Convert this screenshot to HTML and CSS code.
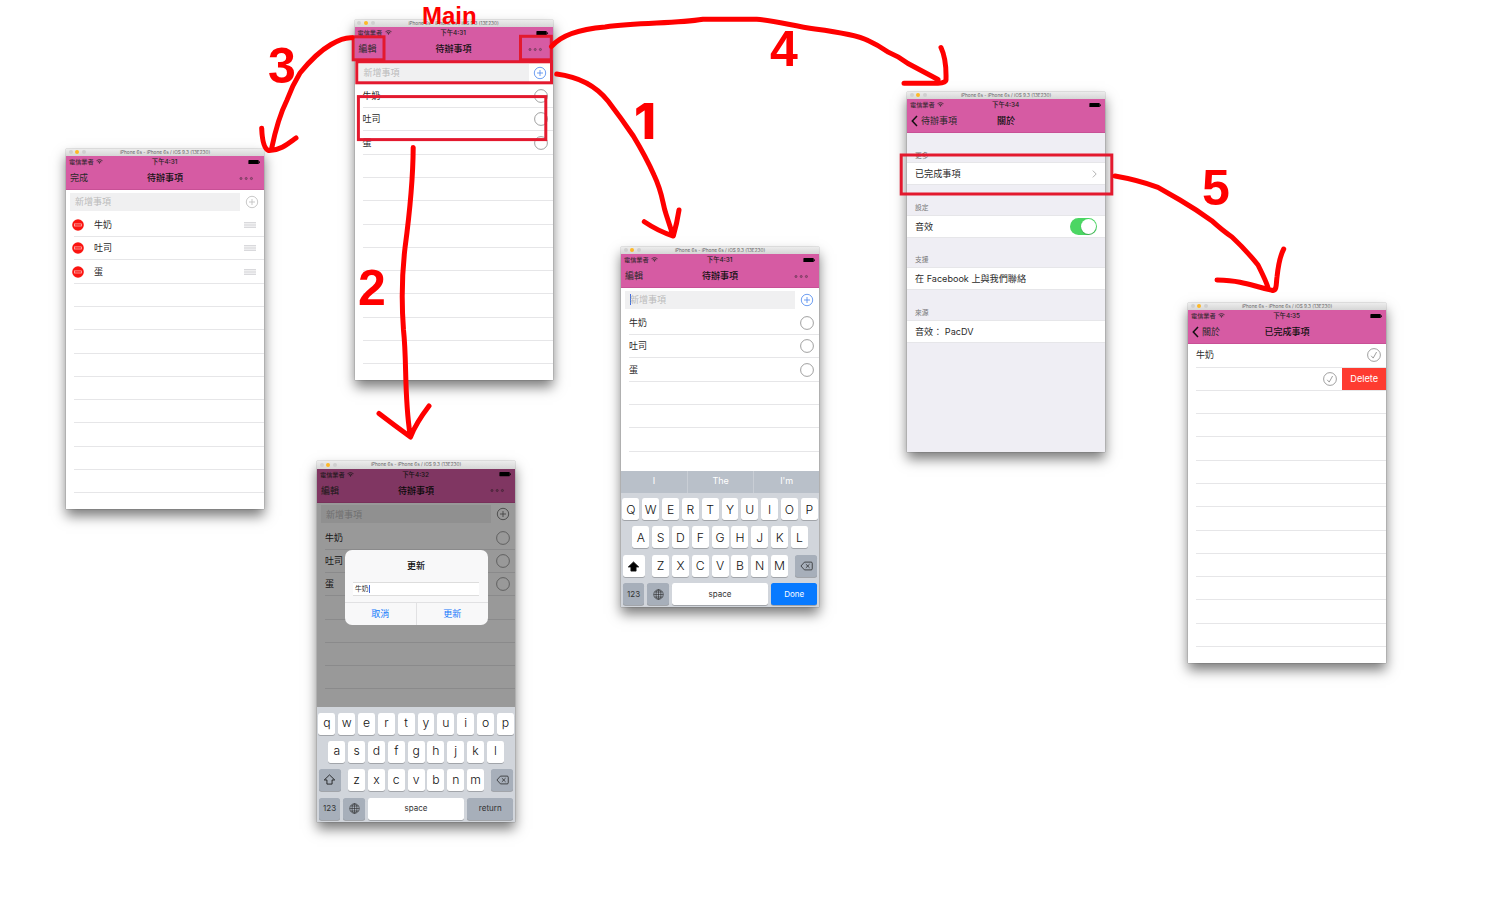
FILE: index.html
```html
<!DOCTYPE html>
<html lang="zh-Hant">
<head>
<meta charset="utf-8">
<title>待辦事項</title>
<link rel="stylesheet" href="styles.css">
</head>
<body>
<svg class="defs" width="0" height="0">
  <symbol id="wifi" viewBox="0 0 14 10"><path d="M1 3.4Q7-1.6 13 3.4M3.2 5.8Q7 2.6 10.8 5.8" fill="none" stroke="#222" stroke-width="1.4"/><path d="M4.8 7.2Q7 5.6 9.2 7.2L7 9.7z" fill="#222"/></symbol>
  <symbol id="battery" viewBox="0 0 26 10"><rect width="23" height="10" rx="1.5"/><rect x="24" y="3" width="2" height="4"/></symbol>
  <symbol id="dots" viewBox="0 0 15 5"><g fill="#222" fill-opacity=".25" stroke="#222" stroke-opacity=".5" stroke-width=".7"><circle cx="2" cy="2.5" r="1.1"/><circle cx="7.2" cy="2.5" r="1.1"/><circle cx="12.4" cy="2.5" r="1.1"/></g></symbol>
  <symbol id="add" viewBox="0 0 14 14"><g fill="none" stroke="currentColor" stroke-width=".8"><circle cx="7" cy="7" r="5.7"/><path d="M7 4v6M4 7h6"/></g></symbol>
  <symbol id="ring" viewBox="0 0 14 14"><circle cx="7" cy="7" r="6.4" fill="none" stroke="#777" stroke-width=".7"/></symbol>
  <symbol id="tick" viewBox="0 0 14 14"><g fill="none" stroke="#777" stroke-width=".7"><circle cx="7" cy="7" r="6.4"/><path d="M4.2 7.8l2 2.3L9.6 4"/></g></symbol>
  <symbol id="minus" viewBox="0 0 12 12"><circle cx="6" cy="6" r="5.8" fill="#fb1410"/><rect x="2.6" y="4.9" width="6.8" height="2.1" fill="#fb1410" stroke="#ffc4c0" stroke-width=".7"/></symbol>
  <symbol id="grip" viewBox="0 0 12 6"><path d="M0 .8h12M0 3h12M0 5.2h12" stroke="#c9c9cd" stroke-width="1"/></symbol>
  <symbol id="back" viewBox="0 0 7 12"><path d="M6 1L1.3 6 6 11" fill="none" stroke="#111" stroke-width="1.5"/></symbol>
  <symbol id="shift" viewBox="0 0 14 12"><path d="M7 1L1.3 6.5h2.9V11h5.6V6.5h2.9z" fill="currentColor" stroke="#111" stroke-width=".9" stroke-linejoin="round"/></symbol>
  <symbol id="erase" viewBox="0 0 14 10"><path d="M4.8.8H12q1.2 0 1.2 1.2v6q0 1.2-1.2 1.2H4.8L1 5zM6.3 3l4 4m0-4l-4 4" fill="none" stroke="#222" stroke-width=".8" stroke-linejoin="round"/></symbol>
  <symbol id="globe" viewBox="0 0 12 12"><g fill="none" stroke="#222" stroke-width=".6"><circle cx="6" cy="6" r="5.2"/><ellipse cx="6" cy="6" rx="2.6" ry="5.2"/><path d="M6 .8v10.4M.8 6h10.4M1.6 3.3h8.8M1.6 8.7h8.8"/></g></symbol>
</svg>

<main class="board">
  <section class="phone phone-main">
    <header class="titlebar"><i></i><i class="on"></i><i></i><span>iPhone 6s - iPhone 6s / iOS 9.3 (13E230)</span></header>
    <div class="screen">
      <div class="top">
        <div class="status"><span>電信業者 <svg class="wifi"><use href="#wifi"/></svg></span><b>下午4:31</b><svg class="battery"><use href="#battery"/></svg></div>
        <nav class="nav"><span>編輯</span><b>待辦事項</b><svg class="dots"><use href="#dots"/></svg></nav>
      </div>
      <div class="entry"><span class="field">新增事項</span><svg class="ico blue"><use href="#add"/></svg></div>
      <ul class="list">
        <li>牛奶<svg class="ico"><use href="#ring"/></svg></li><li>吐司<svg class="ico"><use href="#ring"/></svg></li><li>蛋<svg class="ico"><use href="#ring"/></svg></li>
        <li></li><li></li><li></li><li></li><li></li><li></li><li></li><li></li><li></li><li></li>
      </ul>
    </div>
  </section>

  <section class="phone phone-edit">
    <header class="titlebar"><i></i><i class="on"></i><i></i><span>iPhone 6s - iPhone 6s / iOS 9.3 (13E230)</span></header>
    <div class="screen">
      <div class="top">
        <div class="status"><span>電信業者 <svg class="wifi"><use href="#wifi"/></svg></span><b>下午4:31</b><svg class="battery"><use href="#battery"/></svg></div>
        <nav class="nav"><span>完成</span><b>待辦事項</b><svg class="dots"><use href="#dots"/></svg></nav>
      </div>
      <div class="entry"><span class="field">新增事項</span><svg class="ico grey"><use href="#add"/></svg></div>
      <ul class="list">
        <li><svg class="minus"><use href="#minus"/></svg>牛奶<svg class="grip"><use href="#grip"/></svg></li>
        <li><svg class="minus"><use href="#minus"/></svg>吐司<svg class="grip"><use href="#grip"/></svg></li>
        <li><svg class="minus"><use href="#minus"/></svg>蛋<svg class="grip"><use href="#grip"/></svg></li>
        <li></li><li></li><li></li><li></li><li></li><li></li><li></li><li></li><li></li><li></li>
      </ul>
    </div>
  </section>

  <section class="phone phone-update">
    <header class="titlebar"><i></i><i class="on"></i><i></i><span>iPhone 6s - iPhone 6s / iOS 9.3 (13E230)</span></header>
    <div class="screen">
      <div class="top">
        <div class="status"><span>電信業者 <svg class="wifi"><use href="#wifi"/></svg></span><b>下午4:32</b><svg class="battery"><use href="#battery"/></svg></div>
        <nav class="nav"><span>編輯</span><b>待辦事項</b><svg class="dots"><use href="#dots"/></svg></nav>
      </div>
      <div class="entry"><span class="field">新增事項</span><svg class="ico dark"><use href="#add"/></svg></div>
      <ul class="list">
        <li>牛奶<svg class="ico"><use href="#ring"/></svg></li><li>吐司<svg class="ico"><use href="#ring"/></svg></li><li>蛋<svg class="ico"><use href="#ring"/></svg></li>
        <li></li><li></li><li></li><li></li><li></li>
      </ul>
      <div class="dim"></div>
      <div class="alert">
        <h2>更新</h2>
        <div class="input">牛奶<i class="caret"></i></div>
        <div class="actions"><span>取消</span><span>更新</span></div>
      </div>
      <div class="keyboard">
        <div class="keys"><kbd>q</kbd><kbd>w</kbd><kbd>e</kbd><kbd>r</kbd><kbd>t</kbd><kbd>y</kbd><kbd>u</kbd><kbd>i</kbd><kbd>o</kbd><kbd>p</kbd></div>
        <div class="keys"><kbd>a</kbd><kbd>s</kbd><kbd>d</kbd><kbd>f</kbd><kbd>g</kbd><kbd>h</kbd><kbd>j</kbd><kbd>k</kbd><kbd>l</kbd></div>
        <div class="keys"><kbd class="mod edge-l"><svg class="shift"><use href="#shift"/></svg></kbd><kbd>z</kbd><kbd>x</kbd><kbd>c</kbd><kbd>v</kbd><kbd>b</kbd><kbd>n</kbd><kbd>m</kbd><kbd class="mod edge-r"><svg class="erase"><use href="#erase"/></svg></kbd></div>
        <div class="keys small"><kbd class="mod num">123</kbd><kbd class="mod num"><svg class="globe"><use href="#globe"/></svg></kbd><kbd class="space">space</kbd><kbd class="mod ret">return</kbd></div>
      </div>
    </div>
  </section>

  <section class="phone phone-add">
    <header class="titlebar"><i></i><i class="on"></i><i></i><span>iPhone 6s - iPhone 6s / iOS 9.3 (13E230)</span></header>
    <div class="screen">
      <div class="top">
        <div class="status"><span>電信業者 <svg class="wifi"><use href="#wifi"/></svg></span><b>下午4:31</b><svg class="battery"><use href="#battery"/></svg></div>
        <nav class="nav"><span>編輯</span><b>待辦事項</b><svg class="dots"><use href="#dots"/></svg></nav>
      </div>
      <div class="entry"><span class="field"><i class="caret"></i>新增事項</span><svg class="ico blue"><use href="#add"/></svg></div>
      <ul class="list">
        <li>牛奶<svg class="ico"><use href="#ring"/></svg></li><li>吐司<svg class="ico"><use href="#ring"/></svg></li><li>蛋<svg class="ico"><use href="#ring"/></svg></li>
        <li></li><li></li><li></li><li></li>
      </ul>
      <div class="keyboard">
        <div class="suggest"><span>I</span><span>The</span><span>I'm</span></div>
        <div class="keys"><kbd>Q</kbd><kbd>W</kbd><kbd>E</kbd><kbd>R</kbd><kbd>T</kbd><kbd>Y</kbd><kbd>U</kbd><kbd>I</kbd><kbd>O</kbd><kbd>P</kbd></div>
        <div class="keys"><kbd>A</kbd><kbd>S</kbd><kbd>D</kbd><kbd>F</kbd><kbd>G</kbd><kbd>H</kbd><kbd>J</kbd><kbd>K</kbd><kbd>L</kbd></div>
        <div class="keys"><kbd class="edge-l"><svg class="shift full"><use href="#shift"/></svg></kbd><kbd>Z</kbd><kbd>X</kbd><kbd>C</kbd><kbd>V</kbd><kbd>B</kbd><kbd>N</kbd><kbd>M</kbd><kbd class="mod edge-r"><svg class="erase"><use href="#erase"/></svg></kbd></div>
        <div class="keys small"><kbd class="mod num">123</kbd><kbd class="mod num"><svg class="globe"><use href="#globe"/></svg></kbd><kbd class="space">space</kbd><kbd class="ret done">Done</kbd></div>
      </div>
    </div>
  </section>

  <section class="phone phone-about">
    <header class="titlebar"><i></i><i class="on"></i><i></i><span>iPhone 6s - iPhone 6s / iOS 9.3 (13E230)</span></header>
    <div class="screen grouped">
      <div class="top">
        <div class="status"><span>電信業者 <svg class="wifi"><use href="#wifi"/></svg></span><b>下午4:34</b><svg class="battery"><use href="#battery"/></svg></div>
        <nav class="nav"><span><svg class="back"><use href="#back"/></svg>待辦事項</span><b>關於</b><em></em></nav>
      </div>
      <h3>更多</h3><div class="cell">已完成事項<svg class="chevron" viewBox="0 0 5 8"><path d="M.8.6L4.2 4 .8 7.4" fill="none" stroke="#aaa" stroke-width=".9"/></svg></div>
      <h3>設定</h3><div class="cell">音效<span class="toggle"></span></div>
      <h3>支援</h3><div class="cell">在 Facebook 上與我們聯絡</div>
      <h3>來源</h3><div class="cell">音效： PacDV</div>
    </div>
  </section>

  <section class="phone phone-done">
    <header class="titlebar"><i></i><i class="on"></i><i></i><span>iPhone 6s - iPhone 6s / iOS 9.3 (13E230)</span></header>
    <div class="screen">
      <div class="top">
        <div class="status"><span>電信業者 <svg class="wifi"><use href="#wifi"/></svg></span><b>下午4:35</b><svg class="battery"><use href="#battery"/></svg></div>
        <nav class="nav"><span><svg class="back"><use href="#back"/></svg>關於</span><b>已完成事項</b><em></em></nav>
      </div>
      <ul class="list">
        <li>牛奶<svg class="ico"><use href="#tick"/></svg></li>
        <li class="swiped"><svg class="ico"><use href="#tick"/></svg><span class="delete">Delete</span></li>
        <li></li><li></li><li></li><li></li><li></li><li></li><li></li><li></li><li></li><li></li><li></li><li></li>
      </ul>
    </div>
  </section>

  <svg class="notes" width="1500" height="900" viewBox="0 0 1500 900">
    <g class="frames">
      <rect x="353.2" y="36.8" width="30.8" height="23"/>
      <rect x="520.5" y="36.3" width="30.8" height="23.5"/>
      <rect x="356.8" y="61.8" width="194.7" height="21"/>
      <rect x="358.4" y="96.6" width="187.4" height="43"/>
      <rect x="901.2" y="155" width="210.6" height="39"/>
    </g>
    <g class="arrows">
      <path d="M352 37.8C344 37 337 41 331 44.5C318 52 309 62 300 73Q292 86 287 100C280 114 275 132 271.5 149M261.7 128.3Q262.5 148 268.5 150.5C280 151 289 143 296 138"/>
      <path d="M556.7 74C580 77 596 86 608 101Q621 118 633.3 136Q646 157 654 175C663 194 662 202 666 214L672.5 234M644.3 221.7Q658 231 673.3 236Q677 223 679 210"/>
      <path d="M551.5 46.5C562 34 581 29 605 27C641 22 674 24 703 19.3L756.7 19.3C775 20.5 793 26 815 29C838 32 857 35 868 40.5Q878 45 888 52Q898 56 908 63.5L938 79.5M904 83.3H938Q946.5 83 946 79Q946.5 59 941 47.5"/>
      <path d="M1115 176Q1138 180 1158 187.3L1180 200Q1197 210 1211.7 220.7Q1223 231 1232 237Q1246 250 1258 265C1263 275 1267 283 1268 288M1217 280C1247 281 1251 286 1273 290.5C1277 290 1276 284 1277 277Q1279 258 1283.7 249"/>
      <path d="M413.2 147.5C413 181 409 218 405 248C401 282 402 310 403.5 330C407 362 404 395 410 434M379 413.5Q394 425 410.5 437Q416 423 429 406"/>
    </g>
    <g class="labels">
      <text class="heading" x="422" y="24">Main</text>
      <text x="268" y="83">3</text>
      <text class="one" x="634" y="139">1</text>
      <text x="770" y="66">4</text>
      <text x="1202" y="205">5</text>
      <text x="358" y="305">2</text>
    </g>
  </svg>
</main>
</body>
</html>
```
FILE: styles.css
```css
* { box-sizing: border-box; }
body { margin: 0; background: #fff; overflow: hidden; }
.defs { position: absolute; }
.board {
  position: relative; width: 1500px; height: 900px;
  font-family: Inter, "Noto Sans CJK TC", sans-serif; color: #2a2a2a;
}

/* simulator windows pinned on the board */
.phone { position: absolute; width: 198.2px; height: 360.5px; box-shadow: 0 7px 12px rgba(0,0,0,.52), 0 0 1px rgba(0,0,0,.5); }
.phone-main { left: 354.5px; top: 19.5px; }
.phone-edit { left: 66px; top: 148.5px; }
.phone-update { left: 317px; top: 461px; }
.phone-add { left: 621px; top: 246.5px; }
.phone-about { left: 907px; top: 91.5px; }
.phone-done { left: 1188px; top: 302.5px; }

.titlebar {
  display: flex; align-items: center; gap: 2.8px; height: 7.5px; padding-left: 2.5px;
  background: linear-gradient(#ececec, #d6d6d6); position: relative;
}
.titlebar i { width: 4px; height: 4px; border-radius: 50%; background: #cfcfcf; }
.titlebar i.on { background: #fdb827; }
.titlebar span { flex: 1; text-align: center; padding-right: 23px; font-size: 4.72px; line-height: 7px; color: #666; white-space: nowrap; }

.screen { position: relative; height: 353px; background: #fff; overflow: hidden; display: flex; flex-direction: column; }
.top { height: 34px; flex: none; background: #d65ba3; border-bottom: 1px solid #c85096; }
.status, .nav { display: grid; grid-template-columns: 1fr auto 1fr; align-items: center; white-space: nowrap; }
.status { height: 11px; padding: 1px 4px 0 3px; font-size: 6.2px; line-height: 10px; color: #222; }
.status b { font-weight: 500; font-size: 6.4px; }
.wifi { width: 7px; height: 5px; margin-left: .5px; }
.battery { width: 12.5px; height: 4.5px; justify-self: end; }
.nav { height: 22px; padding: 0 10px 0 4px; font-size: 9px; line-height: 20px; }
.nav b { font-weight: 500; color: #111; margin-left: 6px; }
.nav > span { display: flex; align-items: center; }
.dots { width: 15px; height: 5px; justify-self: end; }
.back { width: 7px; height: 12px; margin-right: 3px; }

.entry { flex: none; height: 23.6px; display: flex; align-items: center; padding: 0 5.5px 0 4px; justify-content: space-between; }
.field { width: 170px; height: 18px; line-height: 17px; background: #f0f0f1; font-size: 9px; color: #bbb; padding-left: 5px; display: flex; align-items: center; }
.ico { width: 14px; height: 14px; flex: none; }
.blue { color: #4a87ee; }
.grey { color: #bbb; }
.dark { color: #666; }
.caret { width: 1px; height: 11px; background: #456be0; flex: none; }
.field .caret { margin-right: -1px; }

.list { list-style: none; margin: 0; padding: .3px 0 0 8px; font-size: 9px; }
.list li { height: 23.29px; border-bottom: 1px solid #e6e6e8; display: flex; align-items: center; padding-right: 5.2px; line-height: 22px; }
.list li .ico { margin-left: auto; }
.minus { width: 12px; height: 12px; margin: 0 10px 0 -2px; }
.grip { width: 12px; height: 6px; margin: 0 3px 0 auto; }
.list .swiped { padding-right: 0; }
.delete { margin-left: 5px; width: 44px; height: 22.3px; background: #fe3b30; color: #fff; text-align: center; line-height: 22px; font-size: 9.2px; }

.dim { position: absolute; inset: 0; background: rgba(0,0,0,.4); }
.alert {
  position: absolute; left: 27.5px; top: 81.5px; width: 143px; height: 75px; border-radius: 7px;
  background: #f8f8f9; display: flex; flex-direction: column; overflow: hidden;
}
.alert h2 { margin: 0; padding-top: 6px; height: 32px; text-align: center; font-size: 9px; line-height: 20px; font-weight: 500; color: #111; }
.input { height: 14px; margin: 0 8.5px; padding-left: 2px; background: #fff; border: 1px solid #ddd; border-left: 0; border-right: 0; font-size: 6.8px; display: flex; align-items: center; line-height: 12px; }
.input .caret { height: 8px; }
.actions { margin-top: 5.5px; flex: 1; border-top: 1px solid #e1e1e3; display: grid; grid-template-columns: 1fr 1fr; color: #1479fb; font-size: 9px; text-align: center; line-height: 22px; }
.actions span + span { border-left: 1px solid #e1e1e3; }

.keyboard {
  position: absolute; left: 0; right: 0; bottom: 0; padding: 0 1.2px 1.7px;
  background: #d1d5db; display: flex; flex-direction: column; gap: 6.2px;
}
.phone-update .keyboard { padding-top: 6px; }
.suggest { height: 21.7px; margin: 0 -1.2px -1px; background: #b9c0c9; display: grid; grid-template-columns: repeat(3, 1fr); color: #fff; font-size: 9px; line-height: 20px; text-align: center; }
.suggest span + span { border-left: 1px solid #c9ced5; }
.keys { display: flex; justify-content: center; gap: 2.95px; height: 22.2px; }
kbd {
  width: 16.9px; height: 22px; flex: none; border-radius: 2.5px; background: #fff; box-shadow: 0 .7px 0 #92959a;
  font: 300 12.2px/22px Inter, sans-serif; color: #111; display: flex; justify-content: center; align-items: center;
}
.phone-add kbd { padding-top: 1px; }
.phone-update kbd { line-height: 20px; padding-bottom: 1px; }
kbd.mod { background: #a7afba; }
kbd.edge-l, kbd.edge-r { width: 22.3px; }
kbd.edge-l { margin-right: 4.1px; }
kbd.edge-r { margin-left: 4.1px; }
.small kbd { font-size: 8px; font-weight: 400; line-height: 21px; color: #333; padding: 0; }
.small kbd.num { width: 21.5px; }
.small kbd.space { width: 96.5px; }
.small kbd.ret { width: 46.2px; }
.small kbd.done { background: #087aff; color: #fff; }
.shift { width: 13px; height: 11px; color: transparent; }
.shift.full { color: #000; }
.erase { width: 13px; height: 10px; }
.globe { width: 11px; height: 11px; }

.grouped { background: #efeef4; }
.grouped h3 { margin: 0; height: 29.2px; padding: 16.5px 0 0 8px; font-size: 6.8px; line-height: 12px; font-weight: 400; color: #777; }
.cell { height: 23.3px; background: #fff; border-top: 1px solid #e6e6e9; border-bottom: 1px solid #e6e6e9; padding: 0 8px; font-size: 9.1px; line-height: 21px; display: flex; align-items: center; justify-content: space-between; white-space: pre; }
.chevron { width: 5px; height: 8px; }
.toggle { width: 27px; height: 16.5px; border-radius: 9px; background: #4bd663; display: flex; justify-content: flex-end; padding: .8px; }
.toggle::after { content: ""; width: 15px; height: 15px; border-radius: 50%; background: #fff; box-shadow: 0 1px 1px rgba(0,0,0,.2); }

.notes { position: absolute; left: 0; top: 0; }
.frames { fill: none; stroke: #e3192e; stroke-width: 3; }
.arrows { fill: none; stroke: #f00; stroke-width: 5; stroke-linecap: round; stroke-linejoin: round; }
.labels { fill: #f00; font: bold 50px "Liberation Sans", Arial, sans-serif; }
.heading { font-size: 24px; }
.one { font-family: Inter, sans-serif; font-weight: 800; }
```
